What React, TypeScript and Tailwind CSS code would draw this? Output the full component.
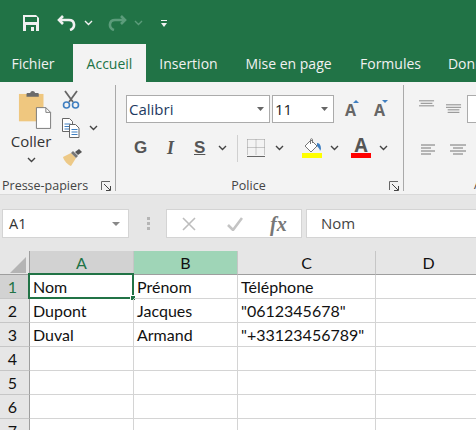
const sans = "font-['Open_Sans','Noto_Sans',sans-serif]";
const cellFont = "font-['Lato','Noto_Sans',sans-serif]";

function Chevron({ className = 'text-[#444]' }: { className?: string }) {
  return (
    <svg width="9" height="6" viewBox="0 0 9 6" className={className}>
      <path d="M1 1l3.5 3.5L8 1" fill="none" stroke="currentColor" strokeWidth="1.4" />
    </svg>
  );
}

function Launcher() {
  return (
    <svg width="10" height="10" viewBox="0 0 10 10">
      <path d="M.5 9V.5H9" fill="none" stroke="#666" />
      <path d="M3 3l6 6M5 9.5h4.5V5" fill="none" stroke="#444" />
    </svg>
  );
}

function Paste() {
  return (
    <svg width="34" height="40" viewBox="0 0 36 42" className="ml-[8px]">
      <path d="M1 4h26v29H1z" fill="#efc77f" />
      <path d="M9 4c0-1 1-1 2-1h2c0-3 5-3 5 0h2c1 0 2 0 2 1v3H9z" fill="#6b6b6b" />
      <path d="M19.500 18.500h10l5 5v17h-15z" fill="#fff" stroke="#777" />
      <path d="M29.500 18.500v5h5" fill="none" stroke="#777" />
    </svg>
  );
}

function Scissors() {
  return (
    <svg width="18" height="19" viewBox="0 0 18 19">
      <path d="M3 1l8 11M15 1L7 12" stroke="#666" strokeWidth="1.8" fill="none" />
      <circle cx="4.500" cy="15" r="3" fill="none" stroke="#3f7fc1" strokeWidth="1.600" />
      <circle cx="13.500" cy="15" r="3" fill="none" stroke="#3f7fc1" strokeWidth="1.600" />
    </svg>
  );
}

function Copy() {
  return (
    <svg width="18" height="20" viewBox="0 0 18 20">
      <path d="M.5.500h7l3 3v10H.5z" fill="#fff" stroke="#666" />
      <path d="M2.500 6h6M2.500 8.500h6M2.500 11h6" stroke="#3f7fc1" />
      <path d="M7.500 6.500h6l3.500 3.500v9.500H7.500z" fill="#fff" stroke="#666" />
      <path d="M9.500 11.500h6M9.500 14h6M9.500 16.500h6" stroke="#3f7fc1" />
    </svg>
  );
}

function Brush() {
  return (
    <svg width="20" height="17" viewBox="0 0 20 17">
      <path d="M1 8l8-4 5 5-5 8c-3-1-7-5-8-9z" fill="#edc987" />
      <path d="M9 4l2-2 5 5-2 2z" fill="#777" />
      <path d="M13 3l4-3 3 3-4 3z" fill="#555" />
    </svg>
  );
}

function GrowFont({ up }: { up: boolean }) {
  return (
    <div className="relative w-[29px] text-[16px] font-bold leading-[16px] text-[#666]">
      A
      <svg width="6" height="3" viewBox="0 0 6 3" className="absolute left-[8px] top-[-2px]">
        <path d={up ? 'M0 3l3-3 3 3z' : 'M0 0h6L3 3z'} fill="#3f7fc1" />
      </svg>
    </div>
  );
}

function Borders() {
  return (
    <svg width="18" height="18" viewBox="0 0 18 18">
      <path d="M.5.500h17M.5 8.500h17M.5.500v16M9 .5v16M17.500.5v16" stroke="#999" strokeDasharray="1 1" fill="none" />
      <path d="M0 17.500h18" stroke="#666" />
    </svg>
  );
}

function Fill() {
  return (
    <svg width="20" height="20" viewBox="0 0 20 20">
      <path d="M3 8l6-6 6 6-6 6z" fill="#fff" stroke="#777" />
      <path d="M8.500 6V1.500c0-1 2-1 2 0V5" fill="none" stroke="#777" />
      <path d="M15 5c3 0 4 3 4 6l-1 2c0-2-2-4-3-5z" fill="#3f7fc1" />
      <path d="M0 15h20v5H0z" fill="#ffff00" />
    </svg>
  );
}

function FontColor() {
  return (
    <div className="flex w-[20px] flex-col items-center">
      <span className="text-[19px] font-bold leading-[15px] text-[#555]">A</span>
      <div className="h-[5px] w-[20px] bg-[#ff0000]" />
    </div>
  );
}

function Lines({ rows, className = '' }: { rows: number[][]; className?: string }) {
  return (
    <svg width="20" height="12" viewBox="0 0 20 12" className={className}>
      {rows.map(([a, b], i) => (
        <path key={i} d={`M${a} ${i * 3 + 1}H${b}`} stroke="#777" />
      ))}
    </svg>
  );
}

function Tab({ label, active, className = '' }: { label: string; active?: boolean; className?: string }) {
  return (
    <div
      className={`flex h-[38px] shrink-0 items-center justify-center ${active ? 'bg-[#f3f3f3] text-[#217346]' : 'text-[#f1f1f1]'} ${className}`}
    >
      {label}
    </div>
  );
}

const rows = [
  ['Nom', 'Prénom', 'Téléphone'],
  ['Dupont', 'Jacques', '"0612345678"'],
  ['Duval', 'Armand', '"+33123456789"'],
  ['', '', ''],
  ['', '', ''],
  ['', '', ''],
  ['', '', ''],
];

export default function App() {
  return (
    <div className={`h-[430px] w-[476px] overflow-hidden bg-white ${sans}`}>
      {/* barre d'accès rapide */}
      <div className="flex h-[44px] items-center bg-[#217346] pl-[23px] pt-[1px]">
        <svg width="16" height="16" viewBox="0 0 16 16">
          <path d="M0 0h13l3 3v13H0z" fill="#f1f1f1" />
          <path d="M2 2h12v5H2z" fill="#217346" />
          <path d="M3 10h10v6H3z" fill="#217346" />
          <path d="M8 12h3v4H8z" fill="#f1f1f1" />
        </svg>
        <svg width="20" height="16" viewBox="0 0 20 16" className="ml-[18px]">
          <path d="M6 1L2 5l4 4" fill="none" stroke="#f1f1f1" strokeWidth="2.600" />
          <path d="M2.500 5H12c6 0 7 8 1 10" fill="none" stroke="#f1f1f1" strokeWidth="2.600" />
        </svg>
        <Chevron className="ml-[7px] text-[#f1f1f1]" />
        <svg width="20" height="16" viewBox="0 0 20 16" className="ml-[14px]">
          <path d="M14 1l4 4-4 4" fill="none" stroke="#5c9c7b" strokeWidth="2.600" />
          <path d="M17.500 5H8c-6 0-7 8-1 10" fill="none" stroke="#5c9c7b" strokeWidth="2.600" />
        </svg>
        <Chevron className="ml-[7px] text-[#5c9c7b]" />
        <svg width="6" height="7" viewBox="0 0 6 7" className="ml-[18px] mt-[2px]">
          <path d="M0 0h6v1H0zM0 3h6L3 7z" fill="#f1f1f1" />
        </svg>
      </div>

      {/* onglets */}
      <div className="flex h-[38px] bg-[#217346] text-[14px]">
        <Tab label="Fichier" className="w-[73px] pr-[7px]" />
        <Tab label="Accueil" active className="w-[73px]" />
        <Tab label="Insertion" className="ml-[14px] w-[57px]" />
        <Tab label="Mise en page" className="ml-[27px] w-[89px]" />
        <Tab label="Formules" className="ml-[27px] w-[61px]" />
        <Tab label="Données" className="ml-[26px] w-[60px]" />
      </div>

      {/* ruban */}
      <div className="flex h-[113px] border-b border-[#d9d9d9] bg-[#f3f3f3] pt-[3px] text-[#444]">
        {/* Presse-papiers */}
        <div className="flex h-[106px] w-[116px] shrink-0 flex-col border-r border-[#a9a9a9]">
          <div className="flex h-[93px] shrink-0">
            <div className="flex w-[62px] flex-col items-center pt-[5px]">
              <Paste />
              <span className="mt-[1px] text-[15px] leading-[20px] text-[#333]">Coller</span>
              <Chevron className="mt-[6px] text-[#444]" />
            </div>
            <div className="flex flex-col items-start pt-[5px]">
              <Scissors />
              <div className="mt-[9px] flex items-center">
                <Copy />
                <Chevron className="ml-[9px]" />
              </div>
              <div className="mt-[11px]">
                <Brush />
              </div>
            </div>
          </div>
          <div className="flex h-[16px] shrink-0 items-center pl-[2px] pr-[4px]">
            <span className="text-[12.500px] leading-[16px]">Presse-papiers</span>
            <span className="ml-auto">
              <Launcher />
            </span>
          </div>
        </div>

        {/* Police */}
        <div className="flex h-[106px] w-[288px] shrink-0 flex-col border-r border-[#a9a9a9]">
          <div className="flex h-[38px] shrink-0 items-start pl-[10px] pt-[10px]">
            <div className="flex h-[28px] w-[144px] items-center justify-between border border-[#ababab] bg-white pl-[2px] pr-[5px] text-[15px] text-[#1e3a5f]">
              <span>Calibri</span>
              <svg width="7" height="4" viewBox="0 0 7 4">
                <path d="M0 0h7L3.500 4z" fill="#666" />
              </svg>
            </div>
            <div className="ml-[2px] flex h-[28px] w-[62px] items-center justify-between border border-[#ababab] bg-white pl-[2px] pr-[5px] text-[15px] text-[#222]">
              <span>11</span>
              <svg width="7" height="4" viewBox="0 0 7 4">
                <path d="M0 0h7L3.500 4z" fill="#666" />
              </svg>
            </div>
            <div className="ml-[11px] flex pt-[7px]">
              <GrowFont up />
              <GrowFont up={false} />
            </div>
          </div>
          <div className="mt-[11px] flex h-[28px] shrink-0 items-center pl-[18px]">
            <span className="w-[30px] font-['Liberation_Sans',sans-serif] text-[17px] font-bold text-[#555]">G</span>
            <span className="w-[30px] pl-[3px] font-['Liberation_Serif',serif] text-[18px] font-bold italic text-[#555]">I</span>
            <span className="w-[24px] font-['Liberation_Sans',sans-serif] text-[17px] font-bold text-[#555] underline">S</span>
            <Chevron />
            <div className="ml-[10px] h-[27px] w-px bg-[#d0d0d0]" />
            <div className="ml-[9px]">
              <Borders />
            </div>
            <Chevron className="ml-[10px]" />
            <div className="ml-[18px]">
              <Fill />
            </div>
            <Chevron className="ml-[8px]" />
            <div className="ml-[12px]">
              <FontColor />
            </div>
            <Chevron className="ml-[8px]" />
          </div>
          <div className="relative mt-[16px] flex h-[16px] shrink-0 items-center justify-center pr-[22px] text-[12.500px]">
            <span>Police</span>
            <span className="absolute right-[4px] top-[3px]">
              <Launcher />
            </span>
          </div>
        </div>

        {/* Alignement */}
        <div className="flex h-[106px] min-w-0 flex-1 flex-col">
          <div className="flex h-[38px] shrink-0 items-start pl-[15px] pt-[14px]">
            <Lines rows={[[0, 18], [2, 16], [0, 18]]} />
            <Lines rows={[[0, 18], [0, 18], [2, 16], [2, 16]]} className="ml-[10px] mt-[4px]" />
            <div className="ml-[5px] mt-[-4px] h-[28px] w-[10px] border border-r-0 border-[#ababab] bg-white" />
          </div>
          <div className="mt-[20px] flex h-[14px] shrink-0 items-center pl-[17px]">
            <Lines rows={[[0, 14], [0, 10], [0, 14], [0, 10]]} />
            <Lines rows={[[0, 16], [3, 13], [0, 16], [3, 13]]} className="ml-[9px]" />
          </div>
          <div className="mt-[20px] whitespace-nowrap pl-[70px] text-[12.500px] leading-[16px]">Alignement</div>
        </div>
      </div>

      {/* barre de formule */}
      <div className="flex h-[56px] items-start bg-[#e6e6e6] pl-[2px] pt-[14px]">
        <div className="flex h-[29px] w-[127px] items-center justify-between border border-[#d4d4d4] bg-white pl-[6px] pr-[8px] text-[14.500px] text-[#333]">
          <span>A1</span>
          <svg width="8" height="4" viewBox="0 0 8 4">
            <path d="M0 0h8L4 4z" fill="#888" />
          </svg>
        </div>
        <div className="ml-[18px] mt-[8px] flex flex-col gap-[2px]">
          <div className="h-[3px] w-[3px] bg-[#b5b5b5]" />
          <div className="h-[3px] w-[3px] bg-[#b5b5b5]" />
          <div className="h-[3px] w-[3px] bg-[#b5b5b5]" />
        </div>
        <div className="ml-[16px] flex h-[29px] w-[136px] items-center border border-[#d4d4d4] bg-white pl-[15px]">
          <svg width="14" height="14" viewBox="0 0 14 14">
            <path d="M1 1l12 12M13 1L1 13" stroke="#bdbdbd" strokeWidth="1.600" />
          </svg>
          <svg width="16" height="14" viewBox="0 0 16 14" className="ml-[31px]">
            <path d="M1 8l5 5L15 1" fill="none" stroke="#c4c4c4" strokeWidth="2.600" />
          </svg>
          <span className="ml-[27px] font-['Liberation_Serif',serif] text-[20px] font-bold italic leading-none text-[#777]">fx</span>
        </div>
        <div className="ml-[4px] flex h-[29px] flex-1 items-center border border-r-0 border-[#d4d4d4] bg-white pl-[14px] text-[15px] text-[#444]">
          Nom
        </div>
      </div>

      {/* feuille */}
      <div className={`grid grid-cols-[30px_104px_104px_138px_1fr] ${cellFont} text-[16px] text-[#111]`}>
        <div className="flex h-[24px] items-end justify-end border-b border-r border-[#9e9e9e] bg-[#e6e6e6] pb-[1px] pr-[3px]">
          <svg width="16" height="16" viewBox="0 0 16 16">
            <path d="M16 0v16H0z" fill="#b4b4b4" />
          </svg>
        </div>
        <div className="flex h-[24px] items-center justify-center border-b border-r border-[#9e9e9e] border-r-[#c6c6c6] bg-[#d2d2d2] text-[#217346]">A</div>
        <div className="flex h-[24px] items-center justify-center border-b border-r border-[#9e9e9e] border-r-[#c6c6c6] bg-[#9fd5b7]">B</div>
        <div className="flex h-[24px] items-center justify-center border-b border-r border-[#9e9e9e] border-r-[#c6c6c6] bg-[#e6e6e6]">C</div>
        <div className="flex h-[24px] items-center justify-center border-b border-[#9e9e9e] bg-[#e6e6e6] pl-[5px]">D</div>
        {rows.map((row, i) => (
          <div key={i} className="contents">
            <div
              className={`flex h-[24px] items-center justify-center border-b border-r border-b-[#c6c6c6] border-r-[#9e9e9e] pr-[4px] ${i === 0 ? 'bg-[#d2d2d2] text-[#217346]' : 'bg-[#e6e6e6]'}`}
            >
              {i + 1}
            </div>
            {row.map((value, j) => (
              <div
                key={j}
                className="relative flex h-[24px] items-center whitespace-nowrap border-b border-r border-[#d4d4d4] pl-[3px]"
              >
                {value}
                {i === 0 && j === 0 && (
                  <>
                    <div className="absolute bottom-[-1px] left-[-2px] right-[-1px] top-[-2px] border-2 border-[#217346]" />
                    <div className="absolute bottom-[-3px] right-[-3px] h-[6px] w-[6px] border border-white bg-[#217346]" />
                  </>
                )}
              </div>
            ))}
            <div className="h-[24px] border-b border-[#d4d4d4]" />
          </div>
        ))}
      </div>
    </div>
  );
}
